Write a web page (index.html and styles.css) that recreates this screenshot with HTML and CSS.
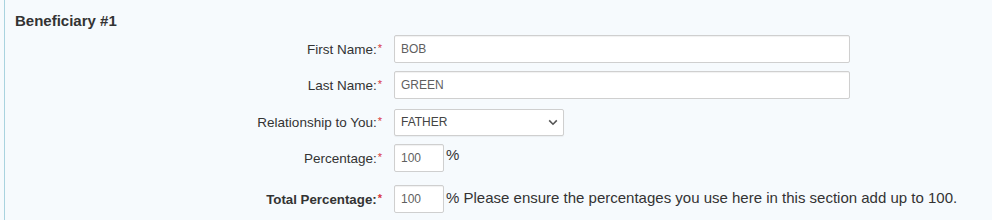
FILE: index.html
```html
<!DOCTYPE html>
<html lang="en">
<head>
    <meta charset="UTF-8">
    <title>Beneficiary</title>
    <link rel="stylesheet" href="styles.css">
</head>
<body>
    <div class="panel">
        <h3 class="panel-title">Beneficiary #1</h3>

        <div class="form-row">
            <label class="field-label">First Name:<span class="req">*</span></label>
            <input class="text-input wide" type="text" value="BOB">
        </div>

        <div class="form-row">
            <label class="field-label">Last Name:<span class="req">*</span></label>
            <input class="text-input wide" type="text" value="GREEN">
        </div>

        <div class="form-row select-row">
            <label class="field-label">Relationship to You:<span class="req">*</span></label>
            <span class="select-wrap">
                <select class="select-input">
                    <option>FATHER</option>
                </select>
                <!-- chevron drawn on top of the select -->
                <svg class="chevron" width="10" height="7" viewBox="0 0 10 7">
                    <path d="M1.2 1.4 L5 5.2 L8.8 1.4" fill="none" stroke="#555" stroke-width="1.6"/>
                </svg>
            </span>
        </div>

        <div class="form-row">
            <label class="field-label">Percentage:<span class="req">*</span></label>
            <input class="text-input small" type="text" value="100">
            <span class="after-text">%</span>
        </div>

        <div class="form-row total-row">
            <label class="field-label bold">Total Percentage:<span class="req">*</span></label>
            <input class="text-input small" type="text" value="100">
            <span class="after-text">% Please ensure the percentages you use here in this section add up to 100.</span>
        </div>
    </div>
</body>
</html>
```

FILE: styles.css
```css
body {
    margin: 0;
    font-family: "Liberation Sans", Arial, sans-serif;
    background-color: #f6fafd;
    color: #333;
}

.panel {
    margin-left: 4px;
    border-left: 1px solid #a9d3df;
    height: 220px;
    box-sizing: border-box;
    padding-top: 12px;
}

.panel-title {
    margin: 0 0 5px 10px;
    font-size: 15px;
    line-height: 18px;
    font-weight: bold;
    color: #333;
}

.form-row {
    display: flex;
    align-items: center;
    margin-bottom: 8px;
    min-height: 28px;
}

.select-row {
    margin-top: 9px;
}

.total-row {
    margin-top: 13px;
}

.field-label {
    width: 377px;
    text-align: right;
    font-size: 13.5px;
    color: #333;
    margin-right: 12px;
}

.field-label.bold {
    font-weight: bold;
    font-size: 13.3px;
}

.req {
    color: #d9363e;
    font-size: 11px;
    vertical-align: 2px;
    margin-left: 1px;
}

.text-input {
    box-sizing: border-box;
    height: 28px;
    border: 1px solid #cfcfcf;
    border-radius: 2px;
    background: #fff;
    box-shadow: inset 0 1px 1px rgba(0, 0, 0, 0.06);
    padding: 0 6px;
    font-family: "Liberation Sans", Arial, sans-serif;
    font-size: 12px;
    color: #5f5f5f;
}

.text-input.wide {
    width: 456px;
}

.text-input.small {
    width: 50px;
}

.after-text {
    align-self: flex-start;
    margin-top: 2px;
    margin-left: 2px;
    font-size: 15px;
    color: #333;
}

.total-row .after-text {
    margin-top: 4px;
}

.select-wrap {
    position: relative;
    display: inline-block;
}

.select-input {
    appearance: none;
    -webkit-appearance: none;
    box-sizing: border-box;
    width: 170px;
    height: 27px;
    border: 1px solid #cfcfcf;
    border-radius: 2px;
    background: #fff;
    box-shadow: 0 1px 1px rgba(0, 0, 0, 0.05);
    padding: 0 6px;
    font-family: "Liberation Sans", Arial, sans-serif;
    font-size: 12px;
    color: #444;
}

.chevron {
    position: absolute;
    right: 6px;
    top: 10px;
    pointer-events: none;
}
```
